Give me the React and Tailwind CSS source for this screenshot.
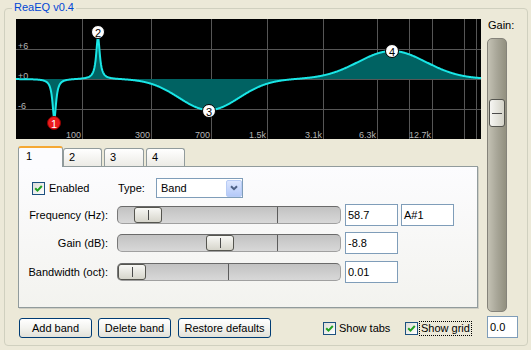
import React from "react";

// graph geometry (local to the black plot area)
const W = 465;
const H = 120;
const BASE = 60;

const VLINES = [66, 135, 195, 251, 307, 361, 393, 416, 448, 460];
const HLINES = [30, 60, 90];
const FREQ_LABELS = [
  ["100", 66],
  ["300", 135],
  ["700", 195],
  ["1.5k", 251],
  ["3.1k", 307],
  ["6.3k", 361],
  ["12.7k", 416],
];
const DB_LABELS = [
  ["+6", 29.5],
  ["+0", 59.5],
  ["-6", 89.5],
];

const MARKERS = [
  { n: 1, x: 38, y: 104, red: true },
  { n: 2, x: 82, y: 13 },
  { n: 3, x: 193, y: 92 },
  { n: 4, x: 376, y: 32 },
];

function curveY(x) {
  let d = 0;
  d += 40 / (1 + ((x - 38.3) / 2.2) ** 2); // band 1 notch
  d -= 42 / (1 + ((x - 82) / 2.2) ** 2); // band 2 spike
  d += 31 * Math.exp(-((x - 193) ** 2) / (2 * 30 * 30)); // band 3 dip
  d -= 28 * Math.exp(-((x - 376) ** 2) / (2 * 34 * 34)); // band 4 hump
  return BASE + d;
}

const EqGraph = () => {
  const pts = [];
  for (let x = 0; x <= W; x += 0.5) pts.push(`${x},${curveY(x).toFixed(2)}`);
  const line = pts.join(" ");
  const area = `0,${BASE} ${line} ${W},${BASE}`;

  return (
    <svg width={W} height={H} className="block shrink-0 bg-black">
      {VLINES.map((x) => (
        <line key={x} x1={x + 0.5} y1={0} x2={x + 0.5} y2={H} stroke="#565656" />
      ))}
      {HLINES.map((y) => (
        <line key={y} x1={0} y1={y + 0.5} x2={W} y2={y + 0.5} stroke="#565656" />
      ))}
      {DB_LABELS.map(([t, y]) => (
        <text key={t} x={2} y={y} fill="#b4b4b4" fontSize="9" fontFamily="Liberation Sans, Arial, sans-serif">
          {t}
        </text>
      ))}
      {FREQ_LABELS.map(([t, x]) => (
        <text key={t} x={x - 1} y={119} fill="#b4b4b4" fontSize="9" textAnchor="end" fontFamily="Liberation Sans, Arial, sans-serif">
          {t}
        </text>
      ))}
      <polygon points={area} fill="#006262" />
      <polyline points={line} fill="none" stroke="#19e6e6" strokeWidth="2" />
      {MARKERS.map((m) => (
        <g key={m.n}>
          <circle cx={m.x} cy={m.y} r="6.5" fill={m.red ? "#ec1c1c" : "#ffffff"} stroke={m.red ? "#8a0000" : "#000000"} />
          <text
            x={m.x}
            y={m.y + 0.5}
            fill={m.red ? "#ffffff" : "#000000"}
            fontSize="11"
            textAnchor="middle"
            dominantBaseline="central"
            fontFamily="Liberation Sans, Arial, sans-serif"
          >
            {m.n}
          </text>
        </g>
      ))}
    </svg>
  );
};

const CheckBox = () => (
  <span className="flex h-[13px] w-[13px] shrink-0 items-center justify-center border border-[#1C5180] bg-gradient-to-br from-[#DCDCD7] to-white">
    <svg width="9" height="9" viewBox="0 0 9 9">
      <path d="M1.2 4.2 L3.5 6.6 L7.8 2" stroke="#21A121" strokeWidth="2" fill="none" />
    </svg>
  </span>
);

const TextBox = ({ className = "", children }) => (
  <div className={`flex h-[22px] items-center border border-[#7F9DB9] bg-white pl-[2px] ${className}`}>{children}</div>
);

const XPButton = ({ className = "", children }) => (
  <button className={`h-[20px] rounded-[3px] border border-[#003C74] bg-gradient-to-b from-white via-[#F3F3EF] to-[#E2E1D8] text-center text-[11px] leading-[13px] ${className}`}>
    {children}
  </button>
);

const Thumb = ({ className = "" }) => (
  <div className={`absolute top-0 h-[16px] w-[28px] rounded-[3px] border border-[#55554f] bg-gradient-to-b from-[#f8f8f5] to-[#d6d5cb] ${className}`}>
    <div className="absolute left-[13px] top-[2px] bottom-[2px] w-px bg-[#4b4b4b]" />
  </div>
);

const HSlider = ({ thumb, tick }) => (
  <div className="relative h-[18px] w-[224px] shrink-0 rounded-[5px] border border-[#a0a0a0] border-t-[#6a6a6a] border-l-[#787878] bg-gradient-to-b from-[#c2c2c2] to-[#d8d8d8]">
    <div className={`absolute top-0 bottom-0 w-px bg-[#5c5c5c] ${tick}`} />
    <Thumb className={thumb} />
  </div>
);

const Row = ({ label, thumb, tick, value, extra, className = "" }) => (
  <div className={`flex h-[22px] items-center ${className}`}>
    <span className="w-[98px] shrink-0 whitespace-nowrap pr-[9px] text-right">{label}</span>
    <HSlider thumb={thumb} tick={tick} />
    <TextBox className="ml-[4px] w-[53px]">{value}</TextBox>
    {extra && <TextBox className="ml-[3px] w-[53px]">{extra}</TextBox>}
  </div>
);

export default function App() {
  return (
    <div className="h-[350px] w-[531px] overflow-hidden bg-[#ECE9D8] pl-[4px] pt-[8px] font-['Liberation_Sans',Arial,sans-serif] text-[11px] leading-[13px] text-black">
      <div className="relative flex h-[338px] w-[524px] gap-[6px] rounded-[4px] border border-[#D0D0BF] pl-[11px] pt-[10px]">
        <span className="absolute -top-[8px] left-[7px] bg-[#ECE9D8] px-[2px] text-[#0046D5]">ReaEQ v0.4</span>

        {/* left column */}
        <div className="flex w-[465px] flex-col">
          <EqGraph />

          {/* tabs */}
          <div className="mt-[7px] flex h-[20px] pl-[2px]">
            <div className="relative z-10 h-[21px] w-[45px] rounded-t-[3px] border-x border-t-2 border-x-[#919B9C] border-t-[#F5A834] bg-[#FCFCFE] pl-[7px] pt-[2px]">1</div>
            <div className="mt-[2px] h-[18px] w-[39px] rounded-t-[3px] border border-b-0 border-[#919B9C] bg-gradient-to-b from-white to-[#ECEBE5] pl-[5px] pt-[2px]">2</div>
            <div className="ml-[2px] mt-[2px] h-[18px] w-[40px] rounded-t-[3px] border border-b-0 border-[#919B9C] bg-gradient-to-b from-white to-[#ECEBE5] pl-[5px] pt-[2px]">3</div>
            <div className="ml-[2px] mt-[2px] h-[18px] w-[39px] rounded-t-[3px] border border-b-0 border-[#919B9C] bg-gradient-to-b from-white to-[#ECEBE5] pl-[5px] pt-[2px]">4</div>
          </div>

          {/* tab panel */}
          <div className="ml-[2px] h-[142px] w-[460px] border border-[#919B9C] bg-gradient-to-b from-[#FCFCFE] to-[#F3F3EF] pt-[11px] shadow-[1px_1px_0_0_#cfcec4]">
            <div className="flex h-[20px] items-center pl-[13px]">
              <div className="flex w-[86px] items-center gap-[4px]">
                <CheckBox />
                <span>Enabled</span>
              </div>
              <span className="w-[38px]">Type:</span>
              <div className="flex h-[20px] w-[87px] items-center justify-between border border-[#7F9DB9] bg-white pl-[4px]">
                <span>Band</span>
                <span className="my-[1px] flex h-[17px] w-[16px] items-center justify-center rounded-[2px] border border-[#B8CCF5] bg-gradient-to-b from-[#DCE6FE] to-[#B4C9F8]">
                  <svg width="8" height="6" viewBox="0 0 8 6">
                    <path d="M1 1.2 L4 4.2 L7 1.2" stroke="#4D6185" strokeWidth="2" fill="none" />
                  </svg>
                </span>
              </div>
            </div>

            <Row className="mt-[6px]" label="Frequency (Hz):" thumb="left-[16px]" tick="left-[159px]" value="58.7" extra="A#1" />
            <Row className="mt-[6px]" label="Gain (dB):" thumb="left-[88px]" tick="left-[159px]" value="-8.8" />
            <Row className="mt-[7px]" label="Bandwidth (oct):" thumb="left-[0px]" tick="left-[110px]" value="0.01" />
          </div>

          {/* bottom buttons */}
          <div className="mt-[10px] flex h-[20px] items-center pl-[3px]">
            <XPButton className="w-[73px]">Add band</XPButton>
            <XPButton className="ml-[6px] w-[73px]">Delete band</XPButton>
            <XPButton className="ml-[7px] w-[93px]">Restore defaults</XPButton>
            <div className="ml-[52px] flex w-[82px] items-center gap-[3px]">
              <CheckBox />
              <span>Show tabs</span>
            </div>
            <div className="flex items-center gap-[1px]">
              <CheckBox />
              <span className="border border-dotted border-black px-[1px] leading-[13px]">Show grid</span>
            </div>
          </div>
        </div>

        {/* right column: master gain */}
        <div className="flex w-[31px] flex-col">
          <span className="pl-[1px]">Gain:</span>
          <div className="relative mt-[6px] h-[274px] w-[20px] rounded-[5px] border border-[#85837a] bg-gradient-to-r from-[#c4c2b4] via-[#a8a698] to-[#92907f]">
            <div className="absolute left-[1px] top-[60px] h-[28px] w-[16px] rounded-[3px] border border-[#55554f] bg-gradient-to-r from-[#f6f6f3] to-[#d4d3c8]">
              <div className="absolute left-[2px] right-[2px] top-[13px] h-px bg-[#4b4b4b]" />
            </div>
          </div>
          <TextBox className="mt-[4px] w-[31px]">0.0</TextBox>
        </div>
      </div>
    </div>
  );
}
